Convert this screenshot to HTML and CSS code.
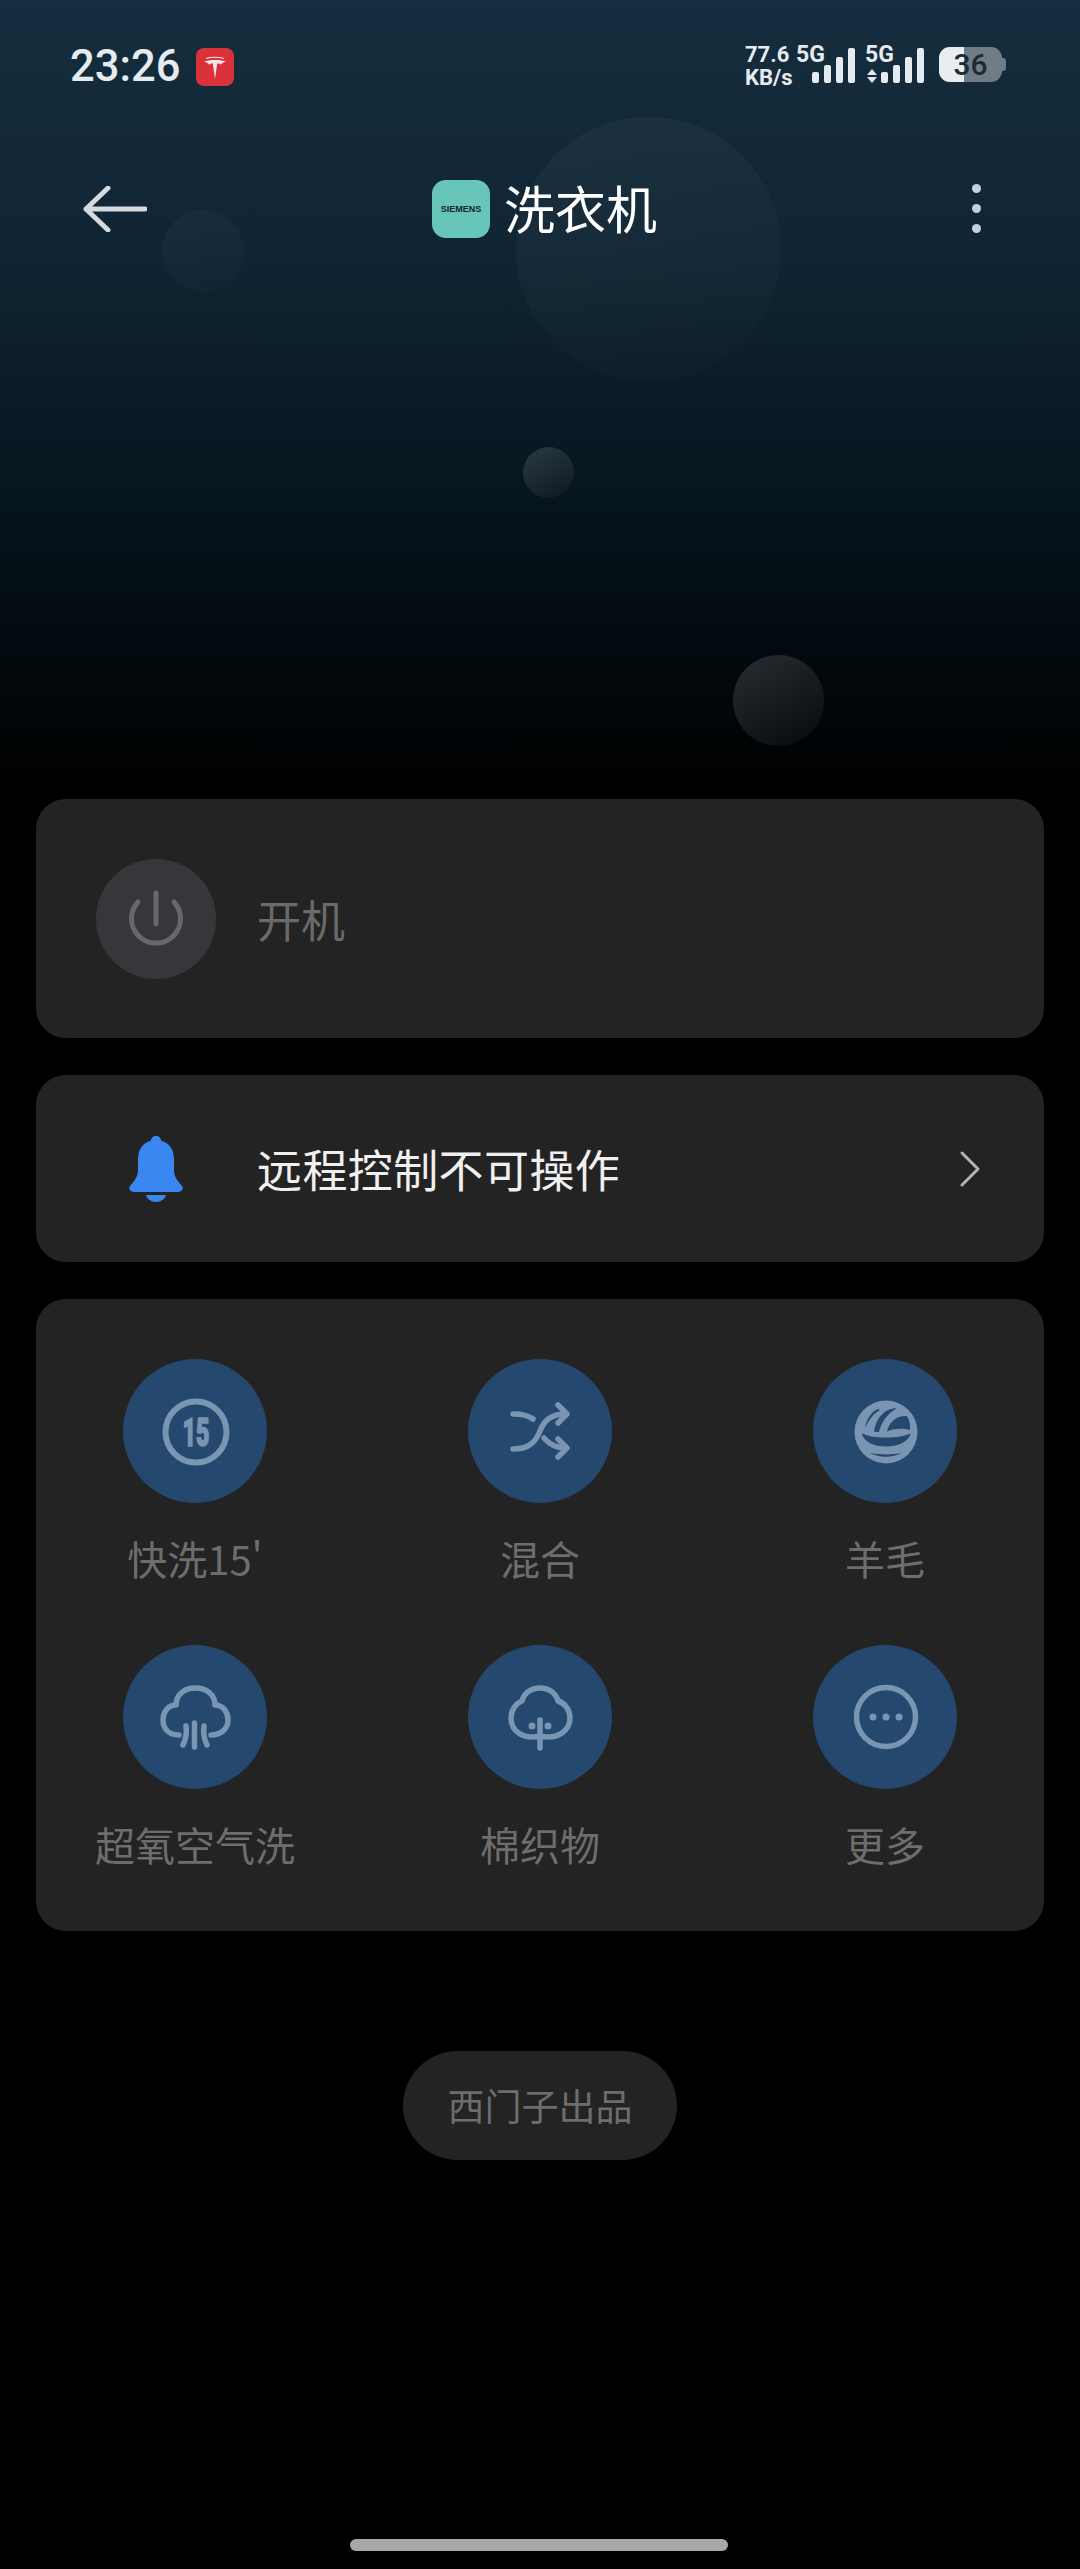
FILE: index.html
```html
<!DOCTYPE html>
<html lang="zh-CN">
<head>
  <meta charset="UTF-8">
  <meta name="viewport" content="width=device-width, initial-scale=1.0">
  <title>洗衣机</title>
  <link rel="stylesheet" href="styles.css">
</head>
<body>

  <!-- Header with bubbles -->
  <div class="hero">
    <div class="bubble bubble-big"></div>
    <div class="bubble bubble-left"></div>
    <div class="bubble bubble-small"></div>
    <div class="bubble bubble-low"></div>

    <!-- Status bar -->
    <div class="statusbar">
      <span class="time">23:26</span>
      <span class="tesla">
        <svg width="38" height="38" viewBox="0 0 38 38">
          <path d="M19 31 L16.800 15.500 C14.800 15.500 13.800 15.800 13.200 16.800 C11.800 15.200 10.200 14.200 8 13.600 C13 11.400 25 11.400 30 13.600 C27.800 14.200 26.200 15.200 24.800 16.800 C24.200 15.800 23.200 15.500 21.200 15.500 Z" fill="#f4e6e6"/>
          <path d="M10 10.500 C15 8.800 23 8.800 28 10.500" fill="none" stroke="#f4e6e6" stroke-width="1.200"/>
        </svg>
      </span>
      <div class="status-right">
        <div class="speed">77.6<br>KB/s</div>
        <div class="sim sim-one">
          <span class="net">5G</span>
          <div class="bars">
            <i class="b1"></i><i class="b2"></i><i class="b3"></i><i class="b4"></i>
          </div>
        </div>
        <div class="sim sim-two">
          <div class="net-col">
            <span class="net">5G</span>
            <svg class="updown" width="10" height="14" viewBox="0 0 10 14">
              <path d="M5 0 L10 6 H0 Z M0 8 H10 L5 14 Z" fill="#dfe5ea"/>
            </svg>
          </div>
          <div class="bars">
            <i class="b1"></i><i class="b2"></i><i class="b3"></i><i class="b4"></i>
          </div>
        </div>
        <div class="battery"><div class="battery-fill"></div><span>36</span></div>
      </div>
    </div>

    <!-- App bar -->
    <div class="appbar">
      <svg class="back" width="64" height="46" viewBox="0 0 64 46">
        <path d="M25 2 L3 23 L25 44 M3 23 H62" fill="none" stroke="#d5dade" stroke-width="5" stroke-linecap="round" stroke-linejoin="round"/>
      </svg>
      <div class="appbar-title">
        <span class="brand">SIEMENS</span>
        <span class="title">洗衣机</span>
      </div>
      <div class="dots"><i></i><i></i><i></i></div>
    </div>
  </div>

  <!-- Power card -->
  <div class="card power-card">
    <div class="power-btn">
      <svg width="120" height="120" viewBox="0 0 120 120">
        <path d="M42 43 A24.5 24.5 0 1 0 78 43 M60 34 V65" fill="none" stroke="#68686a" stroke-width="5" stroke-linecap="round"/>
      </svg>
    </div>
    <span class="power-label">开机</span>
  </div>

  <!-- Notice card -->
  <div class="card notice-card">
    <svg class="bell" width="54" height="66" viewBox="0 0 54 66">
      <path d="M27 0 C30 0 32 2 32 4.500 C41 7 45 14 45 24 V34 C45 42 50 46 53 50 C55 53 53 56 49 56 H5 C1 56 -1 53 1 50 C4 46 9 42 9 34 V24 C9 14 13 7 22 4.500 C22 2 24 0 27 0 Z" fill="#3b87f2"/>
      <path d="M17 59 H37 C36 63 32 66 27 66 C22 66 18 63 17 59 Z" fill="#3b87f2"/>
    </svg>
    <span class="notice-label">远程控制不可操作</span>
    <svg class="chevron" width="24" height="40" viewBox="0 0 24 40">
      <path d="M4 4 L20 20 L4 36" fill="none" stroke="#b4b4b4" stroke-width="3" stroke-linecap="round" stroke-linejoin="round"/>
    </svg>
  </div>

  <!-- Wash programs -->
  <div class="card program-card">
    <div class="program">
      <div class="program-icon">
        <svg width="144" height="144" viewBox="0 0 144 144">
          <circle cx="73" cy="73" r="30.500" class="line ring"/>
          <text x="73" y="87" class="num" textLength="27" lengthAdjust="spacingAndGlyphs">15</text>
        </svg>
      </div>
      <span class="program-label">快洗15'</span>
    </div>
    <div class="program">
      <div class="program-icon">
        <svg width="144" height="144" viewBox="0 0 144 144">
          <path class="line" d="M45 55 C54 55 60 56 65 60 M45 90 C62 90 68 82 72 72 C76 61 84 55 97 55 M76 79 C82 86 88 89 97 89 M90 46 L99 55 L90 64 M90 80 L99 89 L90 98"/>
        </svg>
      </div>
      <span class="program-label">混合</span>
    </div>
    <div class="program">
      <div class="program-icon">
        <svg width="144" height="144" viewBox="0 0 144 144">
          <circle cx="73" cy="73" r="31.500" class="solid"/>
          <path class="cut" d="M48.700 74.300 C58 80 88 80 97.700 74.300 C94 92 52 92 48.700 74.300 Z"/>
          <path class="cut" d="M57 93.700 C66 96 80 96 88.700 93.700 C80 99 66 99 57 93.700 Z"/>
          <path class="cut" d="M65 50 C58 53 53 61 52 69.300 C55 62 60 55 67 51 Z"/>
          <path class="cut" d="M83.700 49.300 C72 49 63 59 61 72.700 L66 73 C68 64 74 55 83.700 49.300 Z"/>
          <path class="cut" d="M94 57 C85 56 76 62 74 72.500 C81 69 90 69 97 71 C97.500 66 96.500 61 94 57 Z"/>
        </svg>
      </div>
      <span class="program-label">羊毛</span>
    </div>
    <div class="program">
      <div class="program-icon">
        <svg width="144" height="144" viewBox="0 0 144 144">
          <path class="line" d="M56 90 C46 90 40 84 40 75 C40 66 46 60 53 60 C53 50 61 43 72.500 43 C84 43 92 50 92 60 C100 60 105 67 105 75 C105 84 98 90 88 90 M71.500 78 V102 M63 81 C64 88 63 94 60 100 M81 81 C80 88 81 94 84 100"/>
        </svg>
      </div>
      <span class="program-label">超氧空气洗</span>
    </div>
    <div class="program">
      <div class="program-icon">
        <svg width="144" height="144" viewBox="0 0 144 144">
          <path class="line" d="M72 91 C55 95 43 86 43 73 C43 65 48 58 54 56 C56 48 63 43 72 43 C81 43 88 48 90 56 C97 58 102 65 102 73 C102 86 89 95 72 91 M72 75 V103"/>
          <circle cx="64" cy="81" r="3.500" class="solid"/>
          <circle cx="80" cy="81" r="3.500" class="solid"/>
        </svg>
      </div>
      <span class="program-label">棉织物</span>
    </div>
    <div class="program">
      <div class="program-icon">
        <svg width="144" height="144" viewBox="0 0 144 144">
          <circle cx="73" cy="72" r="29.500" class="line"/>
          <circle cx="60" cy="72" r="3.500" class="solid"/>
          <circle cx="73" cy="72" r="3.500" class="solid"/>
          <circle cx="86" cy="72" r="3.500" class="solid"/>
        </svg>
      </div>
      <span class="program-label">更多</span>
    </div>
  </div>

  <div class="credit"><span>西门子出品</span></div>

  <div class="homebar"></div>

</body>
</html>
```

FILE: styles.css
```css
* {
  box-sizing: border-box;
}
html, body {
  margin: 0;
  padding: 0;
  background-color: #000;
}
body {
  width: 1080px;
  height: 2569px;
  overflow: hidden;
  position: relative;
  font-family: "Noto Sans CJK SC", "Noto Sans", sans-serif;
}

/* Header */
.hero {
  position: relative;
  height: 799px;
  background: linear-gradient(to bottom, #152d3e 0, #102534 250px, #07161f 480px, #030b10 640px, #000 790px);
}
.bubble {
  position: absolute;
  border-radius: 50%;
}
.bubble-big {
  left: 516px;
  top: 117px;
  width: 265px;
  height: 265px;
  background: linear-gradient(160deg, rgba(255, 255, 255, 0.04), rgba(255, 255, 255, 0.006));
}
.bubble-left {
  left: 162px;
  top: 210px;
  width: 82px;
  height: 82px;
  background: linear-gradient(160deg, rgba(255, 255, 255, 0.032), rgba(255, 255, 255, 0.008));
}
.bubble-small {
  left: 523px;
  top: 447px;
  width: 51px;
  height: 51px;
  background: linear-gradient(150deg, #2b3a45, #0c1820);
}
.bubble-low {
  left: 733px;
  top: 655px;
  width: 91px;
  height: 91px;
  background: linear-gradient(150deg, #272e33, #05090b);
}

/* Status bar */
.statusbar {
  position: relative;
  display: flex;
  align-items: center;
  height: 48px;
  padding: 0 0 0 70px;
  top: 43px;
  color: #e6ebef;
}
.time {
  font-family: Roboto, sans-serif;
  font-weight: 500;
  font-size: 43.500px;
  line-height: 48px;
  width: 126px;
}
.tesla {
  width: 38px;
  height: 38px;
  border-radius: 8px;
  background-color: #d9323a;
}
.tesla svg {
  display: block;
}
.status-right {
  margin-left: auto;
  display: flex;
  align-items: flex-start;
  height: 48px;
  margin-right: 78px;
}
.speed {
  font-family: Roboto, sans-serif;
  font-weight: 700;
  font-size: 22px;
  line-height: 23px;
  width: 51px;
  white-space: nowrap;
}
.sim {
  display: flex;
  align-items: flex-end;
  height: 40px;
}
.net {
  font-family: Roboto, sans-serif;
  font-weight: 700;
  font-size: 23px;
  line-height: 23px;
  display: block;
}
.sim-one {
  width: 60px;
  position: relative;
}
.sim-one .net {
  position: absolute;
  left: 0;
  top: 0;
}
.sim-one .bars {
  margin-left: 16px;
}
.sim-two {
  width: 60px;
  margin-left: 9px;
}
.net-col {
  width: 16px;
  height: 40px;
  position: relative;
}
.net-col .net {
  position: absolute;
  left: 0;
  top: 0;
}
.updown {
  position: absolute;
  left: 2px;
  bottom: 0;
}
.bars {
  display: flex;
  align-items: flex-end;
  gap: 5px;
  height: 35px;
}
.bars i {
  display: block;
  width: 7px;
  border-radius: 2px;
  background-color: #e6ebef;
}
.bars .b1 { height: 11px; }
.bars .b2 { height: 18px; }
.bars .b3 { height: 26px; }
.bars .b4 { height: 35px; }
.battery {
  position: relative;
  width: 63px;
  height: 35px;
  margin-left: 14px;
  margin-top: 4px;
  border-radius: 11px;
  background-color: #6f7c85;
}
.battery::after {
  content: "";
  position: absolute;
  right: -4px;
  top: 11px;
  width: 4px;
  height: 13px;
  border-radius: 0 3px 3px 0;
  background-color: #6f7c85;
}
.battery-fill {
  width: 25px;
  height: 35px;
  border-radius: 11px 0 0 11px;
  background-color: #e8edf0;
}
.battery span {
  position: absolute;
  left: 0;
  right: 0;
  top: 0;
  text-align: center;
  font-family: Roboto, sans-serif;
  font-weight: 500;
  font-size: 30px;
  line-height: 35px;
  color: #1d2a33;
}

/* App bar */
.appbar {
  position: absolute;
  left: 0;
  right: 0;
  top: 176px;
  height: 66px;
  display: flex;
  align-items: center;
  justify-content: center;
}
.back {
  position: absolute;
  left: 83px;
  top: 10px;
}
.appbar-title {
  display: flex;
  align-items: center;
  gap: 14px;
  margin-left: 9px;
}
.brand {
  width: 58px;
  height: 58px;
  border-radius: 14px;
  background-color: #68c5ba;
  color: #10242c;
  font-family: "Liberation Sans", sans-serif;
  font-weight: 700;
  font-size: 9px;
  line-height: 58px;
  text-align: center;
}
.title {
  margin-top: -4px;
  font-size: 51px;
  line-height: 66px;
  color: #fff;
}
.dots {
  position: absolute;
  left: 972px;
  top: 8px;
  display: flex;
  flex-direction: column;
  gap: 11px;
}
.dots i {
  display: block;
  width: 9px;
  height: 9px;
  border-radius: 50%;
  background-color: #c6d0d9;
}

/* Cards */
.card {
  margin: 0 36px;
  border-radius: 30px;
  background-color: #232323;
}
.power-card {
  height: 239px;
  display: flex;
  align-items: center;
  padding-left: 60px;
}
.power-btn {
  width: 120px;
  height: 120px;
  border-radius: 50%;
  background-color: #37373b;
}
.power-btn svg {
  display: block;
}
.power-label {
  margin-left: 41px;
  font-size: 44px;
  color: #6a6a6a;
}
.notice-card {
  margin-top: 37px;
  height: 187px;
  display: flex;
  align-items: center;
  padding-left: 93px;
}
.notice-label {
  margin-left: 74px;
  font-size: 45px;
  letter-spacing: 0.400px;
  color: #f0f0f0;
}
.chevron {
  margin-left: auto;
  margin-right: 62px;
}
.program-card {
  margin-top: 37px;
  height: 632px;
  padding-top: 60px;
  display: grid;
  grid-template-columns: repeat(3, 345px);
  grid-auto-rows: 286px;
  justify-content: center;
}
.program {
  display: flex;
  flex-direction: column;
  align-items: center;
}
.program-icon {
  width: 144px;
  height: 144px;
  border-radius: 50%;
  background-color: #24486e;
}
.program-icon svg {
  display: block;
}
.program-icon .line {
  fill: none;
  stroke: #7995b2;
  stroke-width: 5.500;
  stroke-linecap: round;
  stroke-linejoin: round;
}
.program-icon .ring {
  stroke-width: 6;
}
.program-icon .solid {
  fill: #7995b2;
}
.program-icon .cut {
  fill: #24486e;
}
.program-icon .num {
  font-family: Roboto, sans-serif;
  font-weight: 900;
  font-size: 38px;
  fill: #7995b2;
  stroke: #7995b2;
  stroke-width: 1.500;
  text-anchor: middle;
}
.program-label {
  margin-top: 26px;
  font-size: 40px;
  line-height: 58px;
  color: #6d6d6d;
}

/* Footer */
.credit {
  margin-top: 120px;
  display: flex;
  justify-content: center;
}
.credit span {
  width: 274px;
  height: 109px;
  border-radius: 55px;
  background-color: #232323;
  color: #6d6d6d;
  font-size: 37px;
  line-height: 109px;
  text-align: center;
}
.homebar {
  position: absolute;
  left: 350px;
  top: 2539px;
  width: 378px;
  height: 12px;
  border-radius: 6px;
  background-color: #a8a8a8;
}
```
